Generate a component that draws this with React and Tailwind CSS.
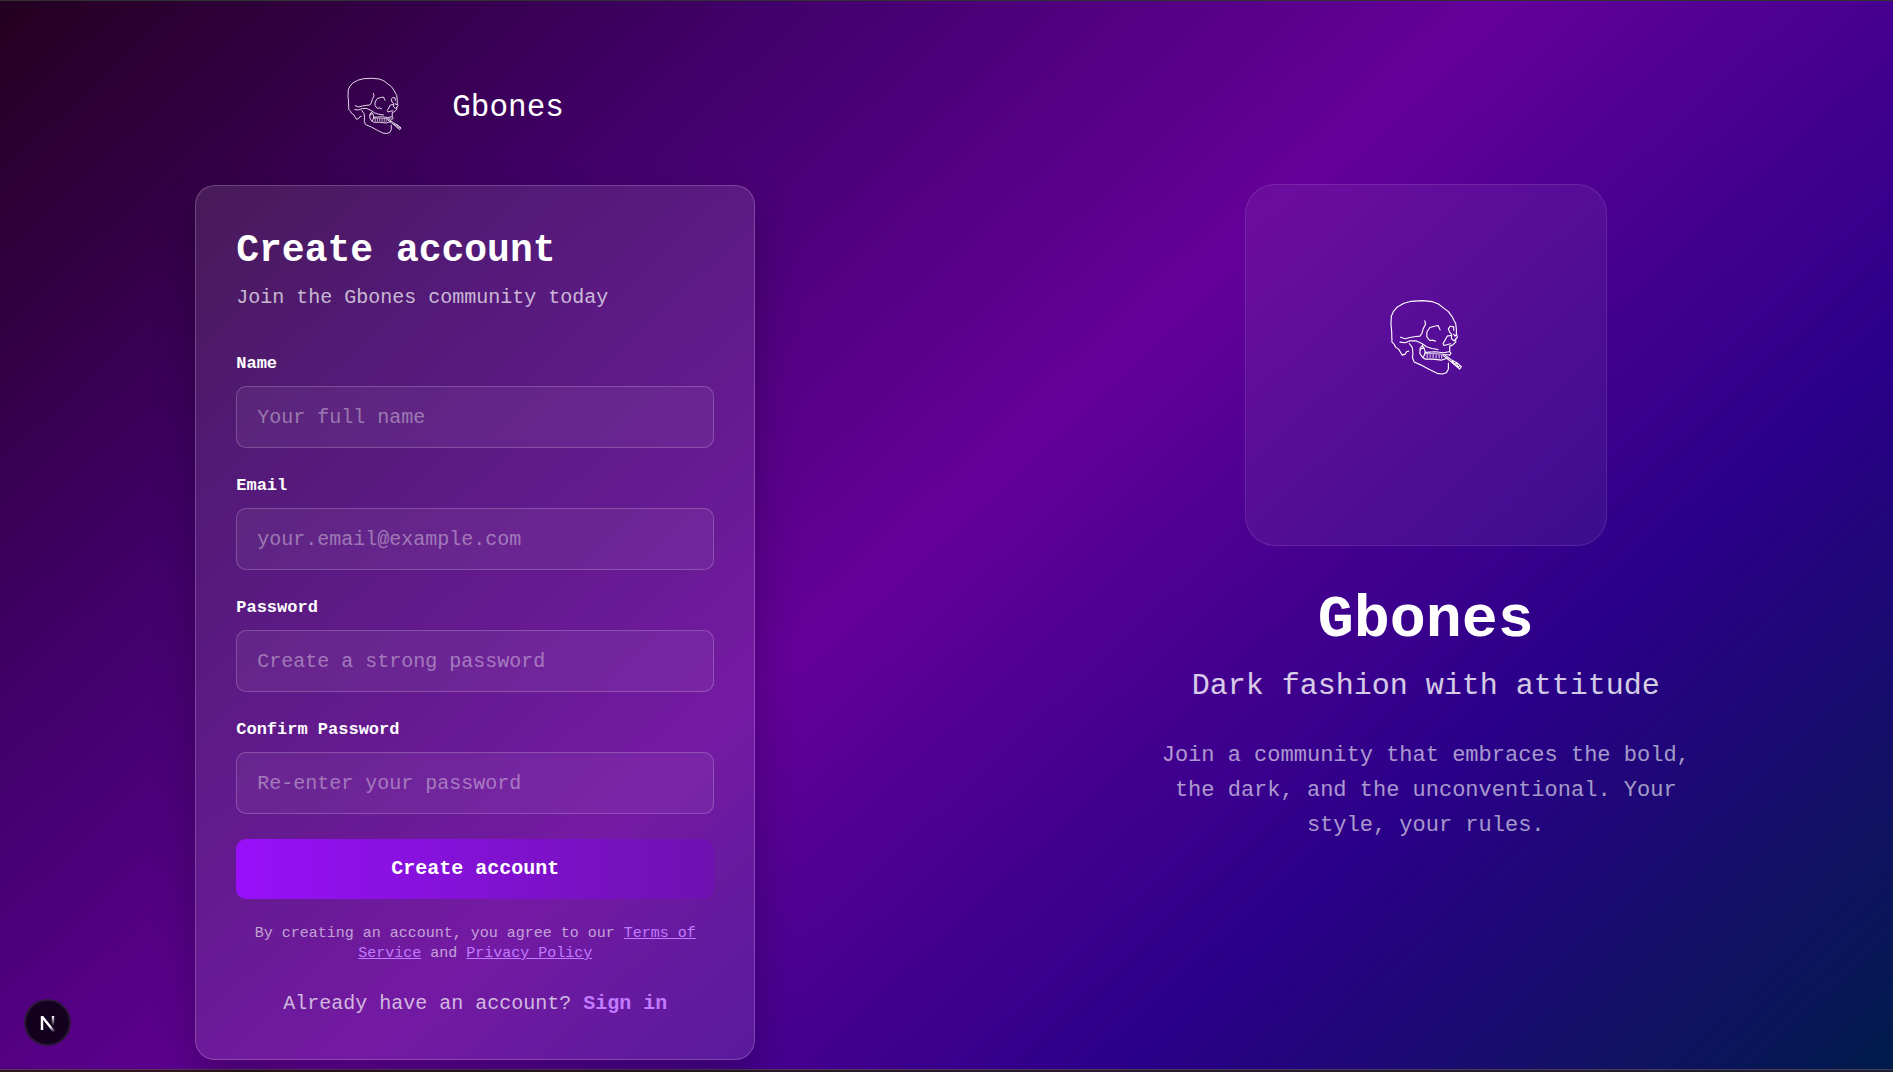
import React from "react";

const fields = [
  { id: "name", label: "Name", type: "text", placeholder: "Your full name" },
  { id: "email", label: "Email", type: "email", placeholder: "your.email@example.com" },
  { id: "password", label: "Password", type: "password", placeholder: "Create a strong password" },
  { id: "confirm", label: "Confirm Password", type: "password", placeholder: "Re-enter your password" },
];

function Skull({ className }) {
  return (
    <svg
      viewBox="60 54 218 232"
      className={className}
      fill="none"
      stroke="currentColor"
      strokeWidth="3.4"
      strokeLinecap="round"
      strokeLinejoin="round"
      aria-hidden="true"
    >
      <path d="M118 211 L112 213 L108 220 L99 223 L94 215 L88 205 L79 199 L75 191 L68 184 L67 150 L65 132 L66 106 L72 92 L84 78 L104 67 L126 61 L160 59 L190 62 L208 69 L222 80 L238 92 L249 107 L255 119 L260 128 L262 145 L262 160 L265 168 L260 176 L260 184 L250 193 L242 196 L242 212 L246 218 L241 224" />
      <path d="M167 120 L169 130 L162 144 L158 158 L152 166 L140 167 L122 170 L108 174 L94 169" />
      <path d="M92 184 L108 186 L122 180 L140 180 L158 188 L172 198 L188 203 L207 206" />
      <path d="M120 188 L129 200 L131 215 L130 232 L135 244 L158 254 L184 268 L204 278 L220 280 L232 276 L238 265 L238 247" />
      <path d="M213 147 L207 134 L196 136 L182 140 L173 154 L173 168 L182 179 L191 178 L199 181" />
      <path d="M241 153 L238 143 L244 136 L254 138 L254 148 M241 153 L248 161 L247 173 L255 180 L260 174 M263 161 L258 166 L254 160" />
      <path d="M245 164 L234 166 L228 178 L222 188 L225 194 L236 191 L244 189" />
      <path d="M160 194 L153 202 L152 218 L160 230 L168 235 L190 235 L218 238 L237 232" />
      <path d="M160 196 L166 205 L168 215 L200 213 L222 216 L241 213 M168 215 L163 229 M153 206 L164 200" />
      <path d="M168 219 L200 219 L240 222 M174 222 V231 M183 223 V230 M192 222 V231 M201 223 V232 M210 223 V232 M218 224 V232" strokeWidth="2.6" />
      <path d="M222 224 L250 246 L272 265 L277 258 L265 247 L245 236 L228 223 M250 242 L258 251 L262 247 L267 259 L273 256" />
    </svg>
  );
}

export default function App() {
  return (
    <div className="min-h-screen overflow-hidden border-t border-[#303332] bg-linear-to-r from-[#35131f] to-[#1c1f33] font-['Liberation_Mono',monospace] text-white">
      <main className="grid min-h-[1069px] w-[calc(100%+8px)] grid-cols-2 border-b border-[#4d3a55] bg-[linear-gradient(137deg,#240020_0%,#41006a_25%,#640099_49%,#2a0088_75%,#001c4b_100%)]">
        <section className="flex flex-col items-center px-10 pt-[75px]">
          <header className="flex h-[59px] w-[560px] items-center gap-[50px] pl-[151px]">
            <Skull className="h-[58px] w-[56px]" />
            <span className="pt-1 text-[31px] font-medium leading-10">Gbones</span>
          </header>

          <div className="mt-[50px] w-full max-w-[560px] rounded-[20px] border border-white/20 bg-white/10 p-10 shadow-[0_20px_40px_rgba(0,0,0,0.25)]">
            <h1 className="text-[38px] font-bold leading-[49px]">Create account</h1>
            <p className="mt-2 text-[20px] leading-[30px] text-white/70">
              Join the Gbones community today
            </p>

            <form className="mt-[38px] flex flex-col gap-[25px]" onSubmit={(e) => e.preventDefault()}>
              {fields.map((f) => (
                <div key={f.id} className="flex flex-col gap-[10px]">
                  <label htmlFor={f.id} className="text-[17px] font-bold leading-[25px]">
                    {f.label}
                  </label>
                  <input
                    id={f.id}
                    type={f.type}
                    placeholder={f.placeholder}
                    className="h-[62px] w-full rounded-[10px] border border-white/20 bg-white/5 px-5 text-[20px] text-white outline-none placeholder:text-white/40"
                  />
                </div>
              ))}
              <button
                type="submit"
                className="h-[60px] rounded-[10px] bg-linear-to-r from-[#9810fa] to-[#6e11b0] text-[20px] font-bold"
              >
                Create account
              </button>
            </form>

            <p className="mt-[25px] text-center text-[15px] leading-5 text-white/60">
              By creating an account, you agree to our{" "}
              <a href="#terms" className="text-[#c27aff] underline">Terms of Service</a> and{" "}
              <a href="#privacy" className="text-[#c27aff] underline">Privacy Policy</a>
            </p>
            <p className="mt-[25px] text-center text-[20px] leading-[30px] text-white/70">
              Already have an account?{" "}
              <a href="#signin" className="font-bold text-[#c27aff]">Sign in</a>
            </p>
          </div>
        </section>

        <section className="flex flex-col items-center px-10 pt-[183px] text-center">
          <div className="flex h-[362px] w-[362px] justify-center rounded-[30px] border border-white/10 bg-white/5 pt-[114px]">
            <Skull className="h-[77px] w-[73px]" />
          </div>
          <h2 className="mt-11 text-[60px] font-bold leading-[60px]">Gbones</h2>
          <p className="mt-4 text-[30px] leading-10 text-white/80">Dark fashion with attitude</p>
          <p className="mt-8 max-w-[560px] text-[22px] leading-[35px] text-white/60">
            Join a community that embraces the bold, the dark, and the unconventional. Your style, your rules.
          </p>
        </section>
      </main>

      <button
        type="button"
        aria-label="Open developer tools"
        className="fixed bottom-[26px] left-6 flex h-[47px] w-[47px] items-center justify-center rounded-full border-2 border-[#2b1738] bg-[#14001f]"
      >
        <svg viewBox="0 0 20 20" className="h-5 w-5" fill="none" aria-hidden="true">
          <defs>
            <linearGradient id="fadeDiagonal" x1="8" y1="8" x2="17" y2="19" gradientUnits="userSpaceOnUse">
              <stop offset="0.5" stopColor="#fff" />
              <stop offset="1" stopColor="#fff" stopOpacity="0" />
            </linearGradient>
            <linearGradient id="fadeStem" x1="0" y1="3" x2="0" y2="13" gradientUnits="userSpaceOnUse">
              <stop stopColor="#fff" />
              <stop offset="1" stopColor="#fff" stopOpacity="0" />
            </linearGradient>
          </defs>
          <path d="M4 3.5 L16 18.5" stroke="url(#fadeDiagonal)" strokeWidth="2.4" />
          <path d="M4 17 V3" stroke="#fff" strokeWidth="2.4" />
          <path d="M15 3 V13" stroke="url(#fadeStem)" strokeWidth="2.4" />
        </svg>
      </button>
    </div>
  );
}
